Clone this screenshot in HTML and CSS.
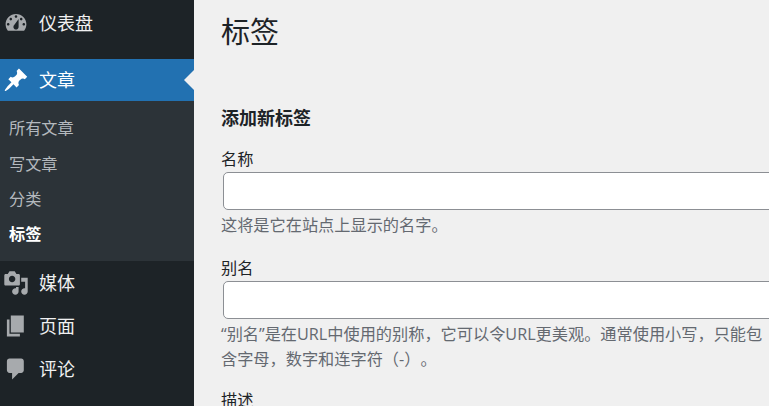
FILE: index.html
```html
<!DOCTYPE html>
<html lang="zh-CN">
<head>
    <meta charset="UTF-8">
    <title>标签</title>
    <link rel="stylesheet" href="styles.css">
</head>
<body>
<div class="page">
    <nav class="sidebar">
        <a class="menu-item dashboard">
            <svg class="menu-icon" viewBox="0 0 20 20"><path fill-rule="evenodd" d="M3.760 16h12.480c1.100-1.370 1.760-3.110 1.760-5 0-4.420-3.580-8-8-8s-8 3.580-8 8c0 1.890.66 3.630 1.760 5zM10 4c.55 0 1 .45 1 1s-.45 1-1 1-1-.45-1-1 .45-1 1-1zM6 6c.55 0 1 .45 1 1s-.45 1-1 1-1-.45-1-1 .45-1 1-1zm8 0c.55 0 1 .45 1 1s-.45 1-1 1-1-.45-1-1 .45-1 1-1zm-5.370 5.550L12 7v6c0 1.100-.9 2-2 2s-2-.9-2-2c0-.57.24-1.080.63-1.450zM4 10c.55 0 1 .45 1 1s-.45 1-1 1-1-.45-1-1 .45-1 1-1zm12 0c.55 0 1 .45 1 1s-.45 1-1 1-1-.45-1-1 .45-1 1-1z"/></svg>
            <span>仪表盘</span>
        </a>
        <a class="menu-item active">
            <svg class="menu-icon" viewBox="0 0 20 20"><path d="M10.440 3.020l1.820-1.820 6.360 6.350-1.830 1.820c-1.050-.68-2.480-.57-3.410.36l-.75.75c-.92.93-1.040 2.350-.35 3.410l-1.830 1.820-2.410-2.410-2.800 2.790c-.42.42-3.380 2.710-3.800 2.290s1.860-3.390 2.280-3.810l2.790-2.790L4.100 9.360l1.830-1.820c1.050.69 2.480.57 3.400-.36l.75-.75c.93-.92 1.050-2.350.36-3.410z"/></svg>
            <span>文章</span>
        </a>
        <div class="submenu">
            <a>所有文章</a>
            <a>写文章</a>
            <a>分类</a>
            <a class="current">标签</a>
        </div>
        <a class="menu-item">
            <svg class="menu-icon" viewBox="0 0 20 20"><path fill-rule="evenodd" d="M13 11V4c0-.55-.45-1-1-1h-1.670L9 1H5L3.670 3H2c-.55 0-1 .45-1 1v7c0 .55.45 1 1 1h10c.55 0 1-.45 1-1zM7 4.500c1.380 0 2.500 1.120 2.500 2.500S8.380 9.500 7 9.500 4.500 8.380 4.500 7 5.620 4.500 7 4.500zM14 6h5v10.500c0 1.380-1.120 2.500-2.500 2.500S14 17.880 14 16.500s1.120-2.500 2.500-2.500c.17 0 .34.02.5.050V9h-3V6zm-4 8.050V13h2v3.500c0 1.380-1.120 2.500-2.500 2.500S7 17.880 7 16.500 8.120 14 9.500 14c.17 0 .34.02.5.050z"/></svg>
            <span>媒体</span>
        </a>
        <a class="menu-item">
            <svg class="menu-icon" viewBox="0 0 20 20"><path d="M6 15V2h10v13H6zm-1 1h8v2H3V5h2v11z"/></svg>
            <span>页面</span>
        </a>
        <a class="menu-item">
            <svg class="menu-icon" viewBox="0 0 20 20"><path d="M5 2h9c1.100 0 2 .9 2 2v7c0 1.100-.9 2-2 2h-2l-5 5v-5H5c-1.100 0-2-.9-2-2V4c0-1.100.9-2 2-2z"/></svg>
            <span>评论</span>
        </a>
    </nav>
    <main class="content">
        <h1>标签</h1>
        <h2>添加新标签</h2>
        <div class="field">
            <label>名称</label>
            <input type="text">
            <p>这将是它在站点上显示的名字。</p>
        </div>
        <div class="field">
            <label>别名</label>
            <input type="text">
            <p>“别名”是在URL中使用的别称，它可以令URL更美观。通常使用小写，只能包含字母，数字和连字符（-）。</p>
        </div>
        <div class="field last">
            <label>描述</label>
        </div>
    </main>
</div>
</body>
</html>
```

FILE: styles.css
```css
html, body {
    margin: 0;
    padding: 0;
    height: 100%;
    overflow: hidden;
}

body {
    font-family: "Open Sans", "Noto Sans CJK SC", sans-serif;
    background-color: #f0f0f0;
    color: #1d2327;
    text-spacing-trim: space-all;
}

.page {
    display: flex;
    height: 406px;
}

.sidebar {
    width: 194px;
    flex-shrink: 0;
    background-color: #1d2327;
    display: flex;
    flex-direction: column;
}

.menu-item {
    display: flex;
    align-items: center;
    height: 43.300px;
    padding-left: 3px;
    font-size: 18px;
    color: #f0f0f1;
    position: relative;
}

.menu-item span {
    margin-left: 10px;
    padding-bottom: 2px;
}

.menu-icon {
    width: 26px;
    height: 26px;
    fill: #a7aaad;
}

.dashboard {
    height: 45px;
    margin-bottom: 14px;
}

.active {
    height: 42px;
    background-color: #2271b1;
    color: #fff;
}

.active .menu-icon {
    fill: #fff;
}

.active::after {
    content: "";
    position: absolute;
    right: 0;
    top: 11px;
    border: 10px solid transparent;
    border-right-color: #f0f0f0;
    border-left-width: 0;
}

.submenu {
    height: 160px;
    background-color: #2c3338;
    padding-top: 10.400px;
    box-sizing: border-box;
    display: flex;
    flex-direction: column;
}

.submenu a {
    height: 35.300px;
    line-height: 35px;
    padding-left: 9px;
    font-size: 16.200px;
    color: #b4b9be;
}

.submenu a.current {
    color: #fff;
    font-weight: 700;
}

.content {
    flex: 1;
    min-width: 0;
    padding-left: 27px;
}

h1 {
    margin: 10px 0 0;
    font-size: 29px;
    font-weight: 400;
    line-height: 44px;
}

h2 {
    margin: 53px 0 0;
    font-size: 18px;
    font-weight: 700;
    line-height: 22px;
}

.field {
    margin-top: 18px;
}

.field.last {
    margin-top: 16px;
}

.field label {
    display: block;
    font-size: 16.200px;
    line-height: 25px;
}

.field input {
    display: block;
    box-sizing: border-box;
    width: 560px;
    height: 38px;
    margin: 0 0 0 2px;
    border: 1px solid #8c8f94;
    border-radius: 5px;
    background-color: #fff;
}

.field p {
    margin: 3px 0 0;
    width: 548px;
    font-size: 16.200px;
    line-height: 25px;
    color: #646970;
}
```
